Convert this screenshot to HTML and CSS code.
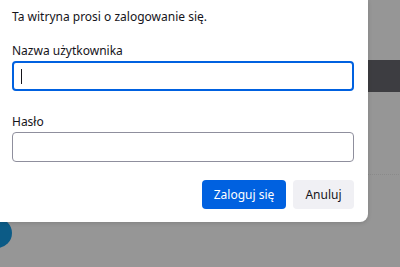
FILE: index.html
```html
<!DOCTYPE html>
<html lang="pl">
<head>
<meta charset="utf-8">
<link rel="stylesheet" href="styles.css">
</head>
<body>
<div class="page">
  <div class="band"></div>
  <div class="dots"></div>
  <div class="circle"></div>
  <div class="dialog">
    <p class="message">Ta witryna prosi o zalogowanie się.</p>
    <div class="field">
      <div class="label">Nazwa użytkownika</div>
      <div class="input focused"><span class="caret"></span></div>
    </div>
    <div class="field">
      <div class="label">Hasło</div>
      <div class="input"></div>
    </div>
    <div class="actions">
      <button class="btn primary">Zaloguj się</button>
      <button class="btn secondary">Anuluj</button>
    </div>
  </div>
</div>
</body>
</html>
```
FILE: styles.css
```css
html, body {
  margin: 0;
  padding: 0;
}
body {
  width: 400px;
  height: 267px;
  overflow: hidden;
  background: #969696;
  font-family: "Noto Sans", "Open Sans", sans-serif;
}
.page {
  position: relative;
  width: 400px;
  height: 267px;
}
.band {
  position: absolute;
  left: 0;
  right: 0;
  top: 60px;
  height: 32px;
  background: #3d3d41;
}
.dots {
  position: absolute;
  left: 0;
  right: 0;
  top: 174px;
  height: 1px;
  background: repeating-linear-gradient(90deg, #8a8a8a 0 1px, transparent 1px 2px);
}
.circle {
  position: absolute;
  left: -18px;
  top: 218px;
  width: 30px;
  height: 30px;
  border-radius: 50%;
  background: #0c5b86;
}
.dialog {
  position: relative;
  width: 368px;
  height: 222px;
  box-sizing: border-box;
  background: #fff;
  border-radius: 0 0 8px 0;
  box-shadow: 0 1px 4px rgba(0,0,0,0.15);
  padding: 8px 14px 0 12px;
  display: flex;
  flex-direction: column;
  color: #15141a;
}
.message {
  margin: 0;
  font-size: 12px;
  line-height: 18px;
}
.field {
  display: flex;
  flex-direction: column;
  margin-top: 16px;
}
.field + .field {
  margin-top: 22px;
}
.label {
  font-size: 12px;
  line-height: 18px;
  margin-bottom: 1px;
}
.input {
  height: 30px;
  box-sizing: border-box;
  border: 1px solid #8f8f9d;
  border-radius: 4px;
  display: flex;
  align-items: center;
  padding-left: 8px;
}
.input.focused {
  border: 2px solid #0061e0;
  padding-left: 7px;
}
.caret {
  width: 1px;
  height: 15px;
  background: #15141a;
}
.actions {
  display: flex;
  justify-content: flex-end;
  gap: 7px;
  margin-top: 18px;
}
.btn {
  height: 29px;
  border: none;
  border-radius: 4px;
  font-family: inherit;
  font-size: 12px;
  padding: 0;
}
.primary {
  width: 84px;
  background: #0061e0;
  color: #fff;
}
.secondary {
  width: 61px;
  background: #f0f0f4;
  color: #15141a;
}
```
